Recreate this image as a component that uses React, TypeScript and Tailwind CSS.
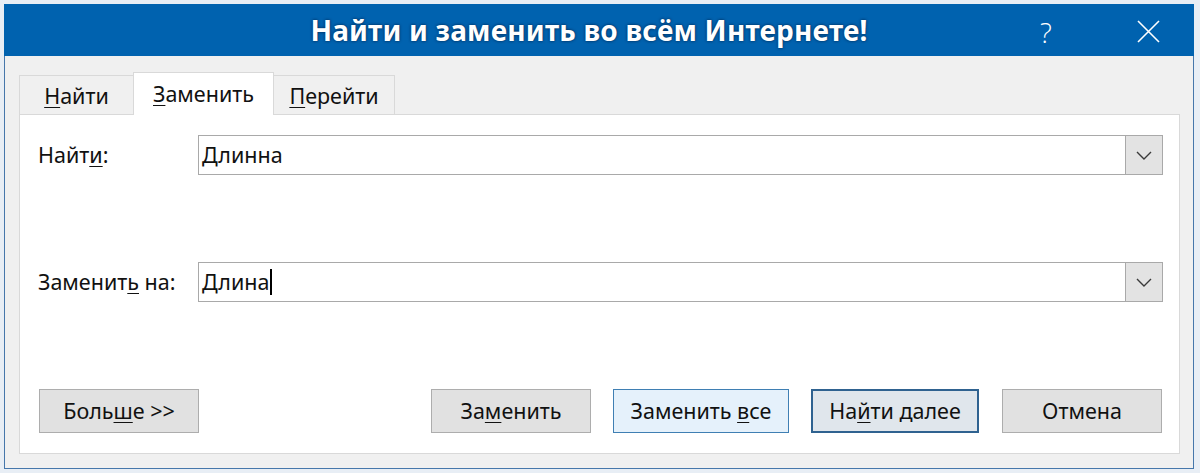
import React from "react";

const U = ({ children }: { children: React.ReactNode }) => (
  <span className="underline decoration-1 underline-offset-[3px]">{children}</span>
);

const Chevron = () => (
  <svg width="16" height="9" viewBox="0 0 16 9" fill="none">
    <path d="M1 1 L8 8 L15 1" stroke="#3a3a3a" strokeWidth="1.4" />
  </svg>
);

const Combo = ({ value, caret }: { value: string; caret?: boolean }) => (
  <div className="flex-1 h-[40px] flex border border-[#a9a9a9] bg-white">
    <div className="flex-1 flex items-center pl-[3px] text-[#111]">
      <span>{value}</span>
      {caret && <span className="w-[1.5px] h-[26px] bg-black ml-[1px]" />}
    </div>
    <div className="w-[37px] h-full bg-[#e3e3e3] border-l border-[#a9a9a9] flex items-center justify-center">
      <Chevron />
    </div>
  </div>
);

export default function App() {
  return (
    <div
      className="w-[1200px] h-[473px] bg-[#e8eef5] pt-[4px] pl-[4px] overflow-hidden"
      style={{ fontFamily: '"Noto Sans", "Open Sans", sans-serif' }}
    >
      <div className="w-[1190px] h-[465px] bg-[#f0f0f0] border-x border-b border-[#4677ab] flex flex-col text-[21.5px] text-[#111]">
        {/* title bar */}
        <div className="h-[52px] -mx-px bg-[#0062af] flex items-center relative shrink-0">
          <div className="flex-1 flex justify-center pr-[20px]">
            <span className="text-white font-bold text-[28px] tracking-[0.2px] [text-shadow:0_0_3px_rgba(0,20,50,0.85)]">
              Найти и заменить во всём Интернете!
            </span>
          </div>
          <span className="absolute left-[1036px] top-[7px] text-white font-light text-[28px]" style={{ fontFamily: '"Open Sans", sans-serif' }}>
            ?
          </span>
          <svg className="absolute left-[1133px] top-[16px]" width="23" height="23" viewBox="0 0 23 23">
            <path d="M1 1 L22 22 M22 1 L1 22" stroke="white" strokeWidth="1.6" />
          </svg>
        </div>

        {/* body */}
        <div className="pl-[14px] pr-[13px] pt-[16px] flex flex-col">
          {/* tabs */}
          <div className="h-[42px] flex items-end">
            <div className="w-[114px] h-[39px] bg-[#f0f0f0] border-l border-t border-[#d9d9d9] flex items-center justify-center pt-[2px]">
              <span><U>Н</U>айти</span>
            </div>
            <div className="w-[141px] h-[43px] bg-white border-x border-t border-[#d9d9d9] flex items-center justify-center -mb-px relative z-10 pt-[1px]">
              <span><U>З</U>аменить</span>
            </div>
            <div className="w-[121px] h-[39px] bg-[#f0f0f0] border-r border-t border-[#d9d9d9] flex items-center justify-center pt-[2px]">
              <span><U>П</U>ерейти</span>
            </div>
          </div>

          {/* panel */}
          <div className="h-[340px] bg-white border border-[#d9d9d9] pl-[18px] pr-[16px] pt-[20px] flex flex-col">
            <div className="flex items-center h-[40px]">
              <div className="w-[160px]">
                Найт<U>и</U>:
              </div>
              <Combo value="Длинна" />
            </div>
            <div className="flex items-center h-[40px] mt-[87px]">
              <div className="w-[160px]">
                Замени<span>т</span><U>ь</U> на:
              </div>
              <Combo value="Длина" caret />
            </div>
            <div className="flex items-center h-[44px] mt-[87px] pl-[1px] pr-[1px]">
              <button className="w-[160px] h-[44px] bg-[#e1e1e1] border border-[#adadad]">
                Боль<U>ш</U>е &gt;&gt;
              </button>
              <div className="flex-1" />
              <button className="w-[160px] h-[44px] bg-[#e1e1e1] border border-[#adadad]">
                За<U>м</U>енить
              </button>
              <button className="w-[176px] h-[44px] ml-[22px] bg-[#e5f1fb] border border-[#3f7fb3]">
                Заменить <U>в</U>се
              </button>
              <button className="w-[168px] h-[44px] ml-[22px] bg-[#e0e6ec] border-2 border-[#2f6290]">
                На<U>й</U>ти далее
              </button>
              <button className="w-[160px] h-[44px] ml-[23px] bg-[#e1e1e1] border border-[#adadad]">
                Отмена
              </button>
            </div>
          </div>
        </div>
      </div>
    </div>
  );
}
